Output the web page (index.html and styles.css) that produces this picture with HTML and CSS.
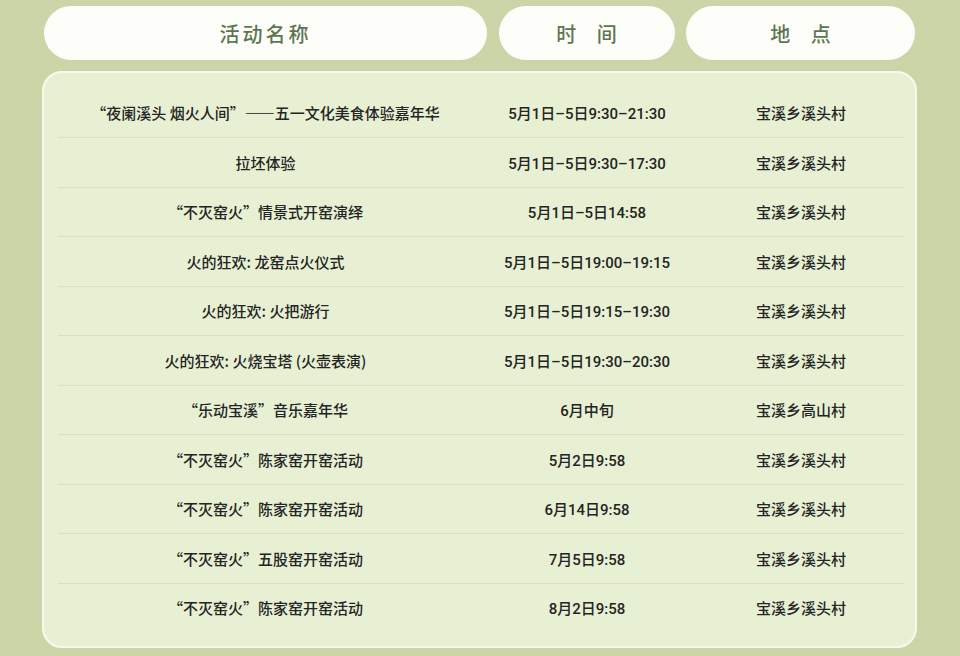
FILE: index.html
```html
<!DOCTYPE html>
<html lang="zh-CN">
<head>
<meta charset="utf-8">
<link rel="stylesheet" href="styles.css">
</head>
<body>
<div class="page">
  <div class="head">
    <div class="pill">活动名称</div>
    <div class="pill wide">时 间</div>
    <div class="pill wide">地 点</div>
  </div>
  <div class="card">
    <div class="row"><div class="c1">“夜阑溪头 烟火人间”——五一文化美食体验嘉年华</div><div class="c2">5月1日–5日9:30–21:30</div><div class="c3">宝溪乡溪头村</div></div>
    <div class="row"><div class="c1">拉坯体验</div><div class="c2">5月1日–5日9:30–17:30</div><div class="c3">宝溪乡溪头村</div></div>
    <div class="row"><div class="c1">“不灭窑火”情景式开窑演绎</div><div class="c2">5月1日–5日14:58</div><div class="c3">宝溪乡溪头村</div></div>
    <div class="row"><div class="c1">火的狂欢: 龙窑点火仪式</div><div class="c2">5月1日–5日19:00–19:15</div><div class="c3">宝溪乡溪头村</div></div>
    <div class="row"><div class="c1">火的狂欢: 火把游行</div><div class="c2">5月1日–5日19:15–19:30</div><div class="c3">宝溪乡溪头村</div></div>
    <div class="row"><div class="c1">火的狂欢: 火烧宝塔 (火壶表演)</div><div class="c2">5月1日–5日19:30–20:30</div><div class="c3">宝溪乡溪头村</div></div>
    <div class="row"><div class="c1">“乐动宝溪”音乐嘉年华</div><div class="c2">6月中旬</div><div class="c3">宝溪乡高山村</div></div>
    <div class="row"><div class="c1">“不灭窑火”陈家窑开窑活动</div><div class="c2">5月2日9:58</div><div class="c3">宝溪乡溪头村</div></div>
    <div class="row"><div class="c1">“不灭窑火”陈家窑开窑活动</div><div class="c2">6月14日9:58</div><div class="c3">宝溪乡溪头村</div></div>
    <div class="row"><div class="c1">“不灭窑火”五股窑开窑活动</div><div class="c2">7月5日9:58</div><div class="c3">宝溪乡溪头村</div></div>
    <div class="row"><div class="c1">“不灭窑火”陈家窑开窑活动</div><div class="c2">8月2日9:58</div><div class="c3">宝溪乡溪头村</div></div>
  </div>
</div>
</body>
</html>
```
FILE: styles.css
```css
html, body {
  margin: 0;
  padding: 0;
}
body {
  background: #cbd5a7;
  width: 960px;
  height: 656px;
  overflow: hidden;
  font-family: "Noto Sans CJK SC", sans-serif;
}
.page {
  padding: 6px 0 0 42px;
}
.head {
  display: grid;
  grid-template-columns: 443px 176px 229px;
  column-gap: 11.5px;
  margin-left: 2px;
  width: 871px;
}
.pill {
  height: 54px;
  border-radius: 27px;
  background: #fdfef9;
  display: flex;
  align-items: center;
  justify-content: center;
  font-size: 20px;
  letter-spacing: 3px;
  color: #5d7651;
  font-weight: 500;
}
.pill.wide {
  letter-spacing: 8px;
  padding-left: 8px;
}
.card {
  margin-top: 10.5px;
  width: 875px;
  box-sizing: border-box;
  background: #e8f0d3;
  border: 2px solid #f6faec;
  border-radius: 20px;
  padding: 16px 11px 14px 14px;
}
.row {
  display: grid;
  grid-template-columns: 415px 228px 203px;
  height: 48.5px;
  align-items: center;
  border-bottom: 1px solid #d7e1bf;
  font-size: 15px;
  font-weight: 500;
  color: #242424;
  text-align: center;
}
.row:last-child {
  border-bottom: none;
}
.c2 {
  font-family: "Roboto", "Noto Sans CJK SC", sans-serif;
  font-weight: 500;
}
.c3 {
  padding-right: 3px;
}
```
